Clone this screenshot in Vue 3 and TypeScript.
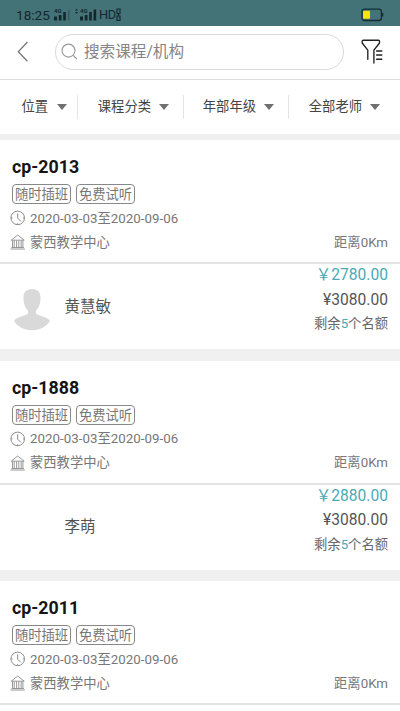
<script setup lang="ts">
interface Offer {
  teacher: string
  avatar: boolean
  price: string
}
interface Course {
  title: string
  offer?: Offer
}

const filters: string[] = ['位置', '课程分类', '年部年级', '全部老师']
const tags: string[] = ['随时插班', '免费试听']
const courses: Course[] = [
  { title: 'cp-2013', offer: { teacher: '黄慧敏', avatar: true, price: '2780.00' } },
  { title: 'cp-1888', offer: { teacher: '李萌', avatar: false, price: '2880.00' } },
  { title: 'cp-2011' },
]
</script>

<template>
  <div class="screen">
    <div class="status">
      <span class="time">18:25</span>
      <svg class="signals" width="45" height="16" viewBox="0 0 45 16">
        <g fill="#14272d">
          <text x="0" y="6" class="net">4G</text>
          <path d="M0 9.500h3v4H0zM4.800 8h2.700v5.500H4.800zM9.200 5h2.600v8.500H9.200z" />
          <path d="M14 2.500h1.500v11H14z" opacity=".3" />
          <path d="M21 3.600l1.500-1.800L24 3.600zM21 5l1.500 1.800L24 5z" />
          <text x="26" y="6" class="net">4G</text>
          <path d="M26 9.500h3v4h-3zM30.800 8h2.700v5.500h-2.700zM35.200 5h2.600v8.500h-2.600zM39.600 2.500h2.600v11h-2.600z" />
        </g>
      </svg>
      <span class="hd">HD</span>
      <svg class="sim" width="6" height="14" viewBox="0 0 6 14" fill="none" stroke="#14272d" stroke-width="1.2">
        <path d="M1 1h3v4.500H1zM1 8h3v4.500H1zM2.500 5.500v2.500" />
      </svg>
      <svg class="battery" width="23" height="14" viewBox="0 0 23 14">
        <rect x="1" y="1.1" width="19.4" height="11.4" rx="2.4" fill="none" stroke="#172d35" stroke-width="1.3" />
        <path d="M21 5h1.3v3.6H21z" fill="#172d35" />
        <rect x="2" y="2.8" width="7" height="8" rx=".8" fill="#f8e503" />
      </svg>
    </div>

    <header class="header">
      <svg class="back" width="12" height="22" viewBox="0 0 12 22" fill="none" stroke="#777" stroke-width="1.3">
        <path d="M10.4 1L1.3 10.7l9.1 9.600" />
      </svg>
      <div class="search">
        <svg width="18" height="18" viewBox="0 0 18 18" fill="none" stroke="#999" stroke-width="1.1">
          <circle cx="7.5" cy="7.6" r="6.5" />
          <path d="M12.2 12.4l3.600 3.600" />
        </svg>
        <span>搜索课程/机构</span>
      </div>
      <svg class="funnel" width="22" height="26" viewBox="0 0 22 26" fill="none" stroke="#222" stroke-width="1.35" stroke-linecap="round" stroke-linejoin="round">
        <path d="M6.800 20.300v-9.100L1.200 4V2.200Q1.200 1.200 2.300 1.200h15.200q1 0 1 1V4l-5.600 7.200v12.900" />
        <path d="M15.600 12h5.200M15.600 16h5.200M15.600 20.200h5.200" />
      </svg>
    </header>

    <nav class="filters">
      <div v-for="f in filters" :key="f" class="filter">
        <span>{{ f }}</span><i class="caret"></i>
      </div>
    </nav>

    <main class="list">
      <article v-for="c in courses" :key="c.title" class="card">
        <div class="summary">
          <h2>{{ c.title }}</h2>
          <div class="tags">
            <span v-for="t in tags" :key="t" class="tag">{{ t }}</span>
          </div>
          <div class="line date">
            <svg width="16" height="16" viewBox="0 0 16 16" fill="none" stroke="#8c8c8c" stroke-width="1">
              <circle cx="7.7" cy="7.9" r="6.8" />
              <path d="M7.700 3.200v5l3.200 3.200M1 7.900h1.500M13 7.900h1.500M7.700 13.200v1.500" />
            </svg>
            <span>2020-03-03至2020-09-06</span>
          </div>
          <div class="line place">
            <svg width="16" height="16" viewBox="0 0 16 16" fill="none" stroke="#8c8c8c" stroke-width=".9">
              <path d="M1.200 6.200L7.700 1l6.500 5.200zM2.500 6.500v7M4.200 6.500v7M6.600 6.500v7M8.800 6.500v7M11.200 6.500v7M12.900 6.500v7M1.500 13.500h12.400M.5 15h14.400" />
            </svg>
            <span>蒙西教学中心</span>
            <span class="distance">距离0Km</span>
          </div>
        </div>
        <div v-if="c.offer" class="detail">
          <div class="avatar">
            <svg v-if="c.offer.avatar" width="36" height="42" viewBox="0 0 36 42" fill="#d9d9d9">
              <path d="M18 0c6 0 8.700 3.500 8.500 9.500-.1 6-2 9.500-4.500 12.200v2.600c0 2.200 12 3.300 14 7.700C32.500 37.500 26 41.300 18 41.300S3.500 37.500 0 32c2-4.400 14-5.500 14-7.700v-2.600C11.500 19 9.600 15.500 9.500 9.500 9.300 3.500 12 0 18 0z" />
            </svg>
          </div>
          <span class="teacher">{{ c.offer.teacher }}</span>
          <div class="prices">
            <div class="now">￥{{ c.offer.price }}</div>
            <div class="old">¥3080.00</div>
            <div class="left">剩余<b>5</b>个名额</div>
          </div>
        </div>
      </article>
    </main>
  </div>
</template>

<style>
body {
  margin: 0;
  overflow: hidden;
}
</style>

<style scoped>
.screen {
  width: 400px;
  height: 711px;
  overflow: hidden;
  background: #fff;
  font-family: Roboto, "Noto Sans CJK SC", sans-serif;
  font-size: 13.3px;
  color: #777;
}
.screen svg {
  display: block;
  flex: none;
}
.status {
  display: flex;
  align-items: center;
  box-sizing: border-box;
  height: 26px;
  padding: 3px 16px 0 16px;
  background: #437277;
  color: #14272d;
}
.time {
  width: 38px;
  font-size: 13.6px;
}
.net {
  font-size: 6px;
  font-weight: 700;
}
.hd {
  width: 17px;
  font-size: 12.8px;
  letter-spacing: -0.4px;
}
.battery {
  margin-left: auto;
}
.header {
  display: flex;
  align-items: center;
  box-sizing: border-box;
  height: 54px;
  padding: 0 17px 1px;
  border-bottom: 1px solid #dcdcdc;
}
.search {
  display: flex;
  align-items: center;
  box-sizing: border-box;
  width: 289px;
  height: 36px;
  margin-left: 26px;
  padding-left: 5px;
  border: 1px solid #d9d9d9;
  border-radius: 18px;
  font-size: 15.6px;
  line-height: 22px;
  color: #858585;
}
.search span {
  margin-left: 5px;
}
.funnel {
  margin-left: 17px;
}
.filters {
  display: grid;
  grid-template-columns: 78px 106px 105px 111px;
  align-items: center;
  box-sizing: border-box;
  height: 54px;
  padding-bottom: 1px;
  color: #444;
}
.filter {
  display: flex;
  align-items: center;
  justify-content: flex-end;
  box-sizing: border-box;
  height: 24px;
  padding-right: 10px;
  border-right: 1px solid #e4e4e4;
}
.filter span {
  margin-top: -2px;
}
.filter:nth-child(2),
.filter:nth-child(3) {
  padding-right: 14px;
}
.filter:last-child {
  padding-right: 20px;
  border-right: 0;
}
.caret {
  width: 0;
  height: 0;
  margin-left: 8px;
  border: 5.5px solid transparent;
  border-top: 6px solid #707070;
  border-bottom: 0;
}
.filter:first-child .caret {
  margin-left: 9px;
}
.list {
  display: flex;
  flex-direction: column;
  gap: 11.5px;
  padding-top: 6px;
  background: #f0f0f0;
}
.card {
  height: 209px;
  background: #fff;
}
.summary {
  box-sizing: border-box;
  height: 124px;
  padding: 16px 12px 0 10px;
  border-bottom: 2px solid #e3e3e3;
}
h2 {
  margin: 0 0 0 2px;
  font-size: 17.8px;
  line-height: 22px;
  font-weight: 700;
  color: #151515;
}
.tags {
  display: flex;
  gap: 5px;
  margin: 6px 0 0 2px;
}
.tag {
  box-sizing: border-box;
  width: 59px;
  height: 20px;
  border: 1px solid #888;
  border-radius: 4px;
  text-align: center;
  line-height: 19px;
  white-space: nowrap;
}
.line {
  display: flex;
  align-items: center;
  height: 20px;
}
.line span {
  margin-top: -2px;
}
.date {
  margin-top: 4px;
  letter-spacing: 0.03px;
}
.place {
  margin-top: 4px;
}
.line svg {
  margin-right: 4px;
}
.line .distance {
  margin-left: auto;
}
.detail {
  display: flex;
  align-items: center;
  height: 85px;
  padding: 0 12px 0 14px;
}
.avatar {
  width: 50.5px;
  margin-top: 6px;
}
.teacher {
  margin-top: -4px;
  font-size: 15.5px;
  color: #555;
}
.prices {
  align-self: flex-start;
  margin-left: auto;
  text-align: right;
  line-height: 24.6px;
  margin-top: -1px;
}
.now,
.old {
  height: 24.6px;
  font-size: 15.6px;
}
.now {
  color: #4aa9b5;
}
.old {
  color: #555;
}
.left {
  height: 24.6px;
  color: #666;
}
.left b {
  font-weight: 400;
  color: #4aa9b5;
}
</style>
